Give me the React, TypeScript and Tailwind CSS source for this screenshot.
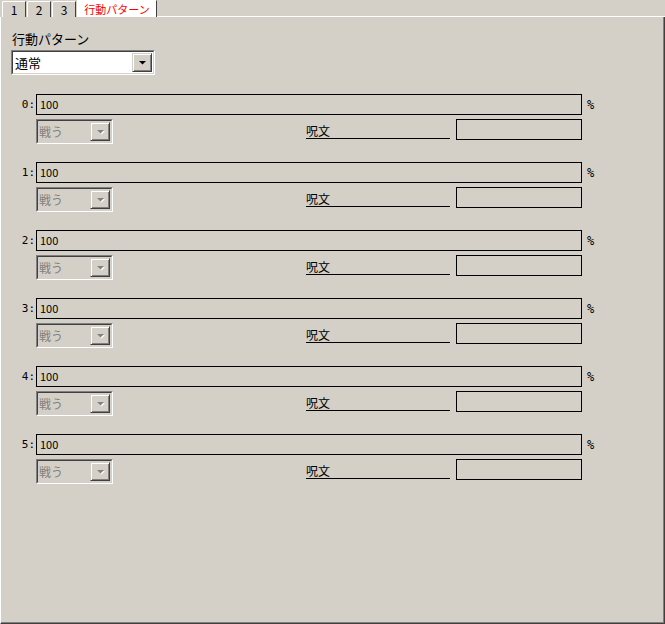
const rows = [0, 1, 2, 3, 4, 5];

function Arrow({ disabled }: { disabled?: boolean }) {
  return (
    <svg width="9" height="6" viewBox="0 0 9 6" className="block">
      {disabled && <path d="M2 2h7l-3.5 3.5z" fill="#ffffff" />}
      <path d="M1 1h7l-3.5 3.5z" fill={disabled ? '#808080' : '#000000'} />
    </svg>
  );
}

function DropButton({ disabled }: { disabled?: boolean }) {
  return (
    <div className="flex h-full w-[20px] items-center justify-center border-t border-l border-t-[#d4d0c8] border-l-[#d4d0c8] border-r border-b border-r-[#404040] border-b-[#404040] bg-[#d4d0c8] shadow-[inset_1px_1px_0_#ffffff,inset_-1px_-1px_0_#808080]">
      <Arrow disabled={disabled} />
    </div>
  );
}

function Tab({ label, active }: { label: string; active?: boolean }) {
  if (active) {
    return (
      <div className="flex h-[17px] w-[80px] items-center justify-center border-l border-r border-t border-l-white border-t-white border-r-[#404040] bg-white text-[11px] text-[#ff0000]">
        {label}
      </div>
    );
  }
  return (
    <div className="mt-[1px] flex h-[16px] w-[24px] items-center justify-center rounded-tl-[2px] border-l border-t border-r border-l-white border-t-white border-r-[#404040] bg-[#d4d0c8] text-[12px] text-black">
      {label}
    </div>
  );
}

function PatternRow({ index }: { index: number }) {
  return (
    <div className="flex flex-col gap-[4px]">
      <div className="flex h-[21px] items-center">
        <div className="w-[35px] pr-[1px] text-right font-['DejaVu_Sans_Mono',monospace] text-[11px] leading-none">
          {index}:
        </div>
        <div className="flex h-full w-[546px] items-center border border-black bg-[#d4d0c8] pl-[3px] text-[11px]">
          100
        </div>
        <div className="ml-[5px] font-['DejaVu_Sans_Mono',monospace] text-[12px] leading-none">%</div>
      </div>
      <div className="flex h-[25px] items-start">
        <div className="ml-[35px] flex h-[25px] w-[77px] items-center border-t border-l border-t-[#808080] border-l-[#808080] border-r border-b border-r-white border-b-white">
          <div className="flex h-full flex-1 items-center border-t border-l border-t-[#404040] border-l-[#404040] border-r border-b border-r-[#d4d0c8] border-b-[#d4d0c8] bg-[#d4d0c8] py-[1px] pl-[1px] pr-[1px]">
            <span className="flex-1 text-[12px] text-[#808080]">戦う</span>
            <DropButton disabled />
          </div>
        </div>
        <div className="ml-[193px] mt-[5px] w-[144px] border-b border-black text-[12px] leading-[14px]">
          呪文
        </div>
        <div className="ml-[6px] h-[21px] w-[126px] border border-black bg-[#d4d0c8]" />
      </div>
    </div>
  );
}

export default function App() {
  return (
    <div className="flex h-[624px] w-[665px] flex-col bg-[#d4d0c8] font-['Noto_Sans_CJK_JP','Noto_Sans',sans-serif] text-black">
      {/* Tab strip */}
      <div className="flex h-[17px] items-start pl-[2px]">
        <div className="flex gap-[1px]">
          <Tab label="1" />
          <Tab label="2" />
          <Tab label="3" />
        </div>
        <div className="ml-[1px]">
          <Tab label="行動パターン" active />
        </div>
        <div className="mt-[16px] h-[1px] flex-1 bg-white" />
      </div>

      {/* Panel */}
      <div className="flex flex-1 flex-col border-l border-r border-b border-l-white border-r-[#404040] border-b-[#404040] shadow-[inset_-1px_-1px_0_#808080]">
        <div className="ml-[11px] mt-[14px] text-[13px] leading-[16px]">行動パターン</div>
        <div className="ml-[10px] mt-[3px] flex h-[25px] w-[144px] border-t border-l border-t-[#808080] border-l-[#808080] border-r border-b border-r-white border-b-white">
          <div className="flex h-full flex-1 items-center border-t border-l border-t-[#404040] border-l-[#404040] border-r border-b border-r-[#d4d0c8] border-b-[#d4d0c8] bg-white py-[1px] pl-[2px] pr-[1px]">
            <span className="flex-1 text-[13px]">通常</span>
            <DropButton />
          </div>
        </div>

        <div className="mt-[19px] flex flex-col gap-[18px]">
          {rows.map((r) => (
            <PatternRow key={r} index={r} />
          ))}
        </div>
      </div>
    </div>
  );
}
